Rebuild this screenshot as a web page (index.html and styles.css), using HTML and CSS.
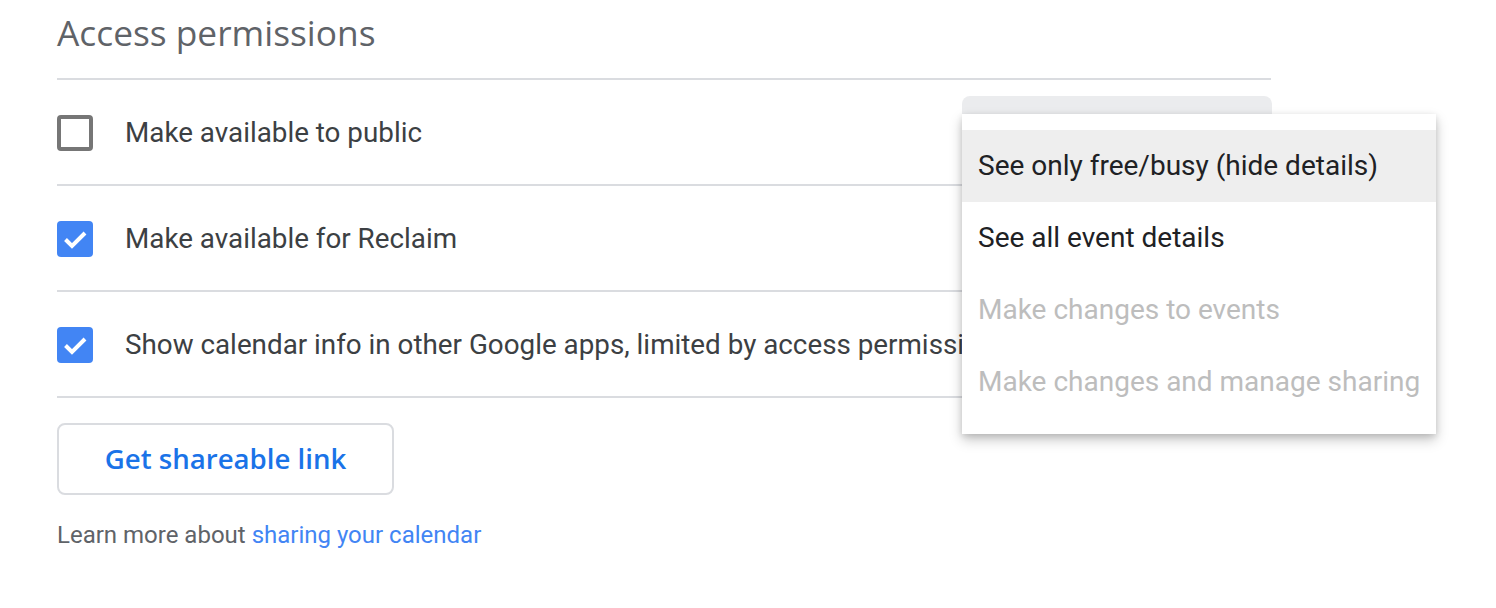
FILE: index.html
```html
<!DOCTYPE html>
<html>
<head>
<meta charset="utf-8">
<link rel="stylesheet" href="styles.css">
</head>
<body>
<div class="page">
  <section class="section">
    <h2 class="title">Access permissions</h2>
    <div class="row">
      <span class="box"></span>
      <span class="label">Make available to public</span>
    </div>
    <div class="row">
      <span class="box checked"><svg viewBox="0 0 36 36" width="36" height="36"><path d="M8.5 18.5 L15 25 L28 12" fill="none" stroke="#fff" stroke-width="4"/></svg></span>
      <span class="label">Make available for Reclaim</span>
    </div>
    <div class="row">
      <span class="box checked"><svg viewBox="0 0 36 36" width="36" height="36"><path d="M8.5 18.5 L15 25 L28 12" fill="none" stroke="#fff" stroke-width="4"/></svg></span>
      <span class="label">Show calendar info in other Google apps, limited by access permissions</span>
    </div>
    <button class="share">Get shareable link</button>
    <p class="learn">Learn more about <a class="link">sharing your calendar</a></p>
  </section>
  <div class="select"></div>
  <ul class="menu">
    <li class="item active">See only free/busy (hide details)</li>
    <li class="item">See all event details</li>
    <li class="item disabled">Make changes to events</li>
    <li class="item disabled">Make changes and manage sharing</li>
  </ul>
</div>
</body>
</html>
```
FILE: styles.css
```css
html, body {
  margin: 0;
  padding: 0;
  background: #fff;
}
.page {
  position: relative;
  width: 1496px;
  height: 608px;
  overflow: hidden;
  font-family: Roboto, "Liberation Sans", sans-serif;
}
.section {
  margin-left: 57px;
  width: 1214px;
}
.title {
  margin: 0;
  height: 80px;
  box-sizing: border-box;
  padding-top: 10px;
  font-family: "Open Sans", sans-serif;
  font-weight: 400;
  font-size: 35.3px;
  line-height: 44px;
  color: #5f6368;
  border-bottom: 2px solid #dadce0;
}
.row {
  display: flex;
  align-items: center;
  height: 104px;
  border-bottom: 2px solid #dadce0;
  white-space: nowrap;
  overflow: hidden;
}
.box {
  flex: none;
  width: 36px;
  height: 36px;
  box-sizing: border-box;
  border: 4px solid #767676;
  border-radius: 4px;
  margin-right: 32px;
  margin-top: 2px;
  position: relative;
}
.box.checked {
  background: #4285f4;
  border: none;
}
.box svg { display: block; }
.label {
  font-size: 27.8px;
  color: #3c4043;
}
.share {
  margin-top: 25px;
  display: block;
  width: 337px;
  height: 72px;
  background: #fff;
  border: 2px solid #dadce0;
  border-radius: 8px;
  font-family: "Open Sans", sans-serif;
  font-weight: 600;
  font-size: 27.6px;
  color: #1a73e8;
  padding: 0;
  padding-bottom: 2px;
}
.learn {
  margin: 22px 0 0;
  font-size: 24px;
  line-height: 36px;
  color: #5f6368;
}
.link {
  color: #4285f4;
}
.select {
  position: absolute;
  left: 962px;
  top: 96px;
  width: 310px;
  height: 72px;
  background: #ebecee;
  border-radius: 8px 8px 0 0;
}
.menu {
  position: absolute;
  left: 962px;
  top: 114px;
  width: 474px;
  margin: 0;
  padding: 16px 0;
  list-style: none;
  background: #fff;
  box-shadow: 0 6px 12px rgba(0,0,0,0.22), 0 2px 6px rgba(0,0,0,0.12);
}
.item {
  height: 72px;
  line-height: 72px;
  padding-left: 16px;
  font-size: 28px;
  color: #202124;
  white-space: nowrap;
}
.item.active {
  background: #eeeeee;
}
.item.disabled {
  color: #bdbdbd;
}
```
